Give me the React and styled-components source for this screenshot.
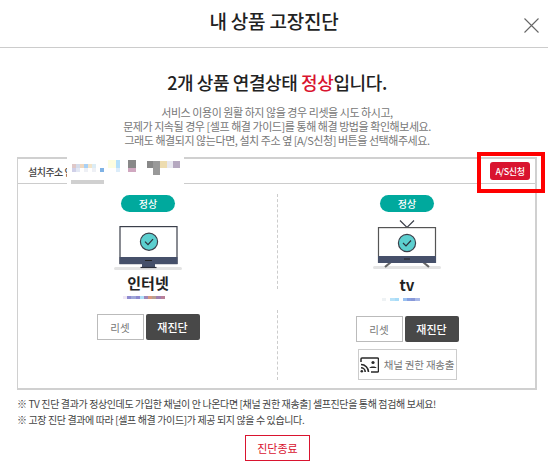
import React from "react";
import styled, { createGlobalStyle } from "styled-components";

const Global = createGlobalStyle`
  html, body { margin: 0; padding: 0; background: #fff; }
  body { font-family: "Noto Sans CJK KR", "Noto Sans", sans-serif; color: #222; }
  * { box-sizing: border-box; }
`;

const Page = styled.div`
  position: relative;
  width: 548px;
  height: 468px;
  overflow: hidden;
  background: #fff;
`;

const Header = styled.header`
  position: relative;
  height: 48px;
  padding-bottom: 5px;
  border-bottom: 1px solid #ccc;
  display: flex;
  align-items: center;
  justify-content: center;
`;

const Title = styled.h1`
  margin: 0;
  font-size: 19px;
  font-weight: 500;
  line-height: 40px;
  letter-spacing: -0.2px;
  color: #222;
`;

const Close = styled.button`
  position: absolute;
  left: 523px;
  top: 17px;
  width: 17px;
  height: 17px;
  padding: 0;
  border: 0;
  background: none;
  line-height: 0;
`;

const Body = styled.main`
  padding: 22px 11px 0 17px;
`;

const Headline = styled.h2`
  margin: 0;
  text-align: center;
  font-size: 18px;
  font-weight: 500;
  line-height: 24px;
  letter-spacing: -0.4px;
  color: #222;
`;

const Red = styled.span`
  color: #d9142f;
`;

const Desc = styled.p`
  margin: 11px 0 0;
  text-align: center;
  font-size: 11px;
  line-height: 14px;
  letter-spacing: -0.45px;
  color: #777;
`;

const Panel = styled.section`
  margin-top: 10px;
  width: 520px;
  height: 233px;
  border-style: solid;
  border-width: 2px 2px 2px 1px;
  border-color: #d0d0d0;
`;

const AddressRow = styled.div`
  height: 25px;
  border-bottom: 1px solid #ccc;
  display: flex;
  align-items: center;
  justify-content: space-between;
  padding: 0 5px 0 10px;
`;

const AddressLabel = styled.span`
  font-size: 10px;
  font-weight: 500;
  letter-spacing: -0.5px;
  color: #444;
`;

const AsButton = styled.button`
  width: 40px;
  height: 18px;
  padding: 0;
  border: 0;
  border-radius: 3px;
  background: #d9142f;
  color: #fff;
  font: 500 9px "Noto Sans CJK KR", sans-serif;
  letter-spacing: -0.4px;
`;

const Columns = styled.div`
  position: relative;
  display: grid;
  grid-template-columns: 260px 258px;
  height: 205px;
`;

const Column = styled.div`
  display: flex;
  flex-direction: column;
  align-items: center;
  padding-top: 11px;
`;

const Divider = styled.div`
  position: absolute;
  left: 259px;
  top: ${(p) => p.$top}px;
  height: ${(p) => p.$height}px;
  border-left: 1px dashed #ccc;
`;

const Pill = styled.div`
  width: 54px;
  height: 17px;
  border-radius: 9px;
  background: #00a99d;
  color: #fff;
  font-size: 10px;
  font-weight: 500;
  line-height: 17px;
  text-align: center;
`;

const Device = styled.svg`
  display: block;
  margin-top: ${(p) => p.$mt}px;
`;

const Name = styled.div`
  margin-top: 1px;
  font-size: 15px;
  font-weight: 700;
  line-height: 24px;
  color: #222;
`;

const Blur = styled.div`
  display: flex;
  height: 3px;
  margin-top: 1px;
  width: 50px;
`;

const BlurCell = styled.i`
  flex: 1;
`;

const ButtonRow = styled.div`
  display: flex;
  gap: 2px;
  margin-top: 15px;
`;

const Reset = styled.button`
  width: 47px;
  height: 26px;
  padding: 0;
  background: #fff;
  border: 1px solid #bbb;
  color: #777;
  font: 400 10.5px "Noto Sans CJK KR", sans-serif;
`;

const Recheck = styled.button`
  width: 54px;
  height: 26px;
  padding: 0;
  background: #484848;
  border: 0;
  border-radius: 2px;
  color: #fff;
  font: 500 11px "Noto Sans CJK KR", sans-serif;
`;

const ChannelButton = styled.button`
  display: flex;
  align-items: center;
  justify-content: center;
  gap: 5px;
  width: 99px;
  height: 31px;
  margin-top: 7px;
  padding: 0;
  background: #fff;
  border: 1px solid #ccc;
  color: #777;
  font: 400 10.5px "Noto Sans CJK KR", sans-serif;
  letter-spacing: -0.2px;
  white-space: nowrap;
`;

const Notes = styled.div`
  margin-top: 6px;
  font-size: 10px;
  line-height: 16px;
  letter-spacing: -0.38px;
  color: #444;
`;

const Footer = styled.div`
  display: flex;
  justify-content: center;
  margin-top: 7px;
  padding-left: 1px;
`;

const EndButton = styled.button`
  width: 65px;
  height: 26px;
  padding: 0;
  background: #fff;
  border: 1px solid #d9142f;
  color: #d9142f;
  font: 400 11px "Noto Sans CJK KR", sans-serif;
`;

const Highlight = styled.div`
  position: absolute;
  left: 477px;
  top: 152px;
  width: 68px;
  height: 41px;
  border: 4px solid #f00;
  pointer-events: none;
`;

const Mask = styled.div`
  position: absolute;
  left: 67px;
  top: 150px;
  width: 117px;
  height: 36px;
  background: #fff;
`;

const Pixel = styled.i`
  position: absolute;
  left: ${(p) => p.$x}px;
  top: ${(p) => p.$y}px;
  width: ${(p) => p.$w}px;
  height: ${(p) => p.$h}px;
  background: ${(p) => p.$c};
`;

const maskPixels = [
  [72, 164, 4, 4, "#dfc8c8"], [76, 164, 4, 4, "#d5dcea"], [80, 164, 4, 4, "#f0d8c0"], [84, 164, 4, 4, "#a8d0f5"],
  [88, 164, 4, 4, "#f3e4c8"], [92, 164, 4, 4, "#dcecf5"], [72, 168, 4, 4, "#d0d0e8"], [76, 168, 4, 4, "#e3e8f4"],
  [84, 168, 4, 4, "#eef0f5"], [92, 168, 4, 4, "#eef0f5"], [100, 168, 4, 4, "#7fb2e5"], [108, 160, 8, 8, "#fdfde0"],
  [116, 160, 4, 8, "#b5e0fa"], [116, 168, 4, 4, "#dcedfa"], [128, 160, 8, 8, "#888"], [128, 168, 8, 4, "#d0a8c0"],
  [147, 161, 6, 7, "#888"], [153, 161, 7, 7, "#999"], [153, 168, 7, 7, "#999"], [160, 161, 7, 7, "#eddcb0"],
  [167, 161, 6, 7, "#e8e8f0"], [173, 161, 7, 7, "#b5a8c0"], [71, 180, 33, 4, "#d0d0d0"],
];

const Monitor = () => (
  <Device $mt={14} width="68" height="44" viewBox="0 0 68 44" fill="none">
    <rect x="0" y="41" width="68" height="3" rx="1.5" fill="#e4e4e4" />
    <rect x="6" y="0.6" width="57" height="37" fill="#fff" stroke="#3b3f4a" strokeWidth="1.2" />
    <rect x="5.5" y="31" width="58" height="7" fill="#46506a" />
    <rect x="31" y="34" width="7" height="1" fill="#222" />
    <path d="M28 38h13v3.5H28z" fill="#46506a" />
    <path d="M26.5 41.5h16" stroke="#2c2f3a" strokeWidth="1.2" />
    <circle cx="35" cy="15.7" r="8.6" fill="#5ccfcf" stroke="#3b3f4a" strokeWidth="1.2" />
    <path d="M31 15.7l3 3 5-5.5" stroke="#2c2f3a" strokeWidth="1.2" />
  </Device>
);

const Tv = () => (
  <Device $mt={8} width="68" height="52" viewBox="0 0 68 52" fill="none">
    <path d="M27 0.5l7 7 7-7" stroke="#3b3f4a" strokeWidth="1.2" />
    <rect x="0" y="46" width="68" height="3" rx="1.5" fill="#e4e4e4" />
    <path d="M18 42l-6 5M50 42l6 5" stroke="#666" strokeWidth="2.2" />
    <rect x="5.5" y="7.6" width="57" height="34.8" fill="#fff" stroke="#555" strokeWidth="1.2" />
    <rect x="5" y="36" width="58" height="7" fill="#46506a" />
    <rect x="31" y="38.5" width="6" height="1" fill="#222" />
    <circle cx="34" cy="23" r="8.6" fill="#5ccfcf" stroke="#3b3f4a" strokeWidth="1.2" />
    <path d="M30 23l3 3 5-5.5" stroke="#2c2f3a" strokeWidth="1.2" />
  </Device>
);

const Cast = () => (
  <svg width="19" height="16" viewBox="0 0 19 16" fill="none" stroke="#2a2a2a">
    <path d="M1 5V2a1 1 0 0 1 1-1h15.5a1 1 0 0 1 1 1v12a1 1 0 0 1-1 1H11" strokeWidth="1.5" />
    <path d="M1 7.5a7.5 7.5 0 0 1 7.5 7.5M1 10.8a4.2 4.2 0 0 1 4.2 4.2" strokeWidth="1.6" />
    <circle cx="1.8" cy="14.2" r="1.3" fill="#2a2a2a" stroke="none" />
    <circle cx="13" cy="5.5" r="1.6" fill="#2a2a2a" stroke="none" />
    <path d="M9.5 11c0-2 7-2 7 0z" fill="#2a2a2a" stroke="none" />
  </svg>
);

const blurA = ["#f0e8f5", "#8e8ad0", "#a0a8d8", "#8e8ad0", "#b0e0f8", "#a088b8", "#d89880", "#b8a090", "#a080b0", "#b88098", "#fff", "#fff"];
const blurB = ["#eef2f4", "#fff", "#b8e2f8", "#a8dcf8", "#fff", "#98c0f0", "#88a0e0", "#8898d8", "#a8b8e8", "#fff", "#fff", "#fff"];

export default function App() {
  return (
    <Page>
      <Global />
      <Header>
        <Title>내 상품 고장진단</Title>
        <Close aria-label="닫기">
          <svg width="17" height="17" viewBox="0 0 17 17" stroke="#666" strokeWidth="1.1">
            <path d="M1.5 1.5l14 14M15.5 1.5l-14 14" />
          </svg>
        </Close>
      </Header>
      <Body>
        <Headline>
          2개 상품 연결상태 <Red>정상</Red>입니다.
        </Headline>
        <Desc>
          서비스 이용이 원활 하지 않을 경우 리셋을 시도 하시고,
          <br />
          문제가 지속될 경우 [셀프 해결 가이드]를 통해 해결 방법을 확인해보세요.
          <br />
          그래도 해결되지 않는다면, 설치 주소 옆 [A/S신청] 버튼을 선택해주세요.
        </Desc>
        <Panel>
          <AddressRow>
            <AddressLabel>설치주소 안내</AddressLabel>
            <AsButton>A/S신청</AsButton>
          </AddressRow>
          <Columns>
            <Divider $top={10} $height={95} />
            <Divider $top={126} $height={70} />
            <Column>
              <Pill>정상</Pill>
              <Monitor />
              <Name>인터넷</Name>
              <Blur>
                {blurA.map((c, i) => (
                  <BlurCell key={i} style={{ background: c }} />
                ))}
              </Blur>
              <ButtonRow>
                <Reset>리셋</Reset>
                <Recheck>재진단</Recheck>
              </ButtonRow>
            </Column>
            <Column>
              <Pill>정상</Pill>
              <Tv />
              <Name>tv</Name>
              <Blur>
                {blurB.map((c, i) => (
                  <BlurCell key={i} style={{ background: c }} />
                ))}
              </Blur>
              <ButtonRow>
                <Reset>리셋</Reset>
                <Recheck>재진단</Recheck>
              </ButtonRow>
              <ChannelButton>
                <Cast />
                채널 권한 재송출
              </ChannelButton>
            </Column>
          </Columns>
        </Panel>
        <Notes>
          ※ TV 진단 결과가 정상인데도 가입한 채널이 안 나온다면 [채널 권한 재송출] 셀프진단을 통해 점검해 보세요!
          <br />
          ※ 고장 진단 결과에 따라 [셀프 해결 가이드]가 제공 되지 않을 수 있습니다.
        </Notes>
        <Footer>
          <EndButton>진단종료</EndButton>
        </Footer>
      </Body>
      <Mask />
      {maskPixels.map(([x, y, w, h, c], i) => (
        <Pixel key={i} $x={x} $y={y} $w={w} $h={h} $c={c} />
      ))}
      <Highlight />
    </Page>
  );
}
